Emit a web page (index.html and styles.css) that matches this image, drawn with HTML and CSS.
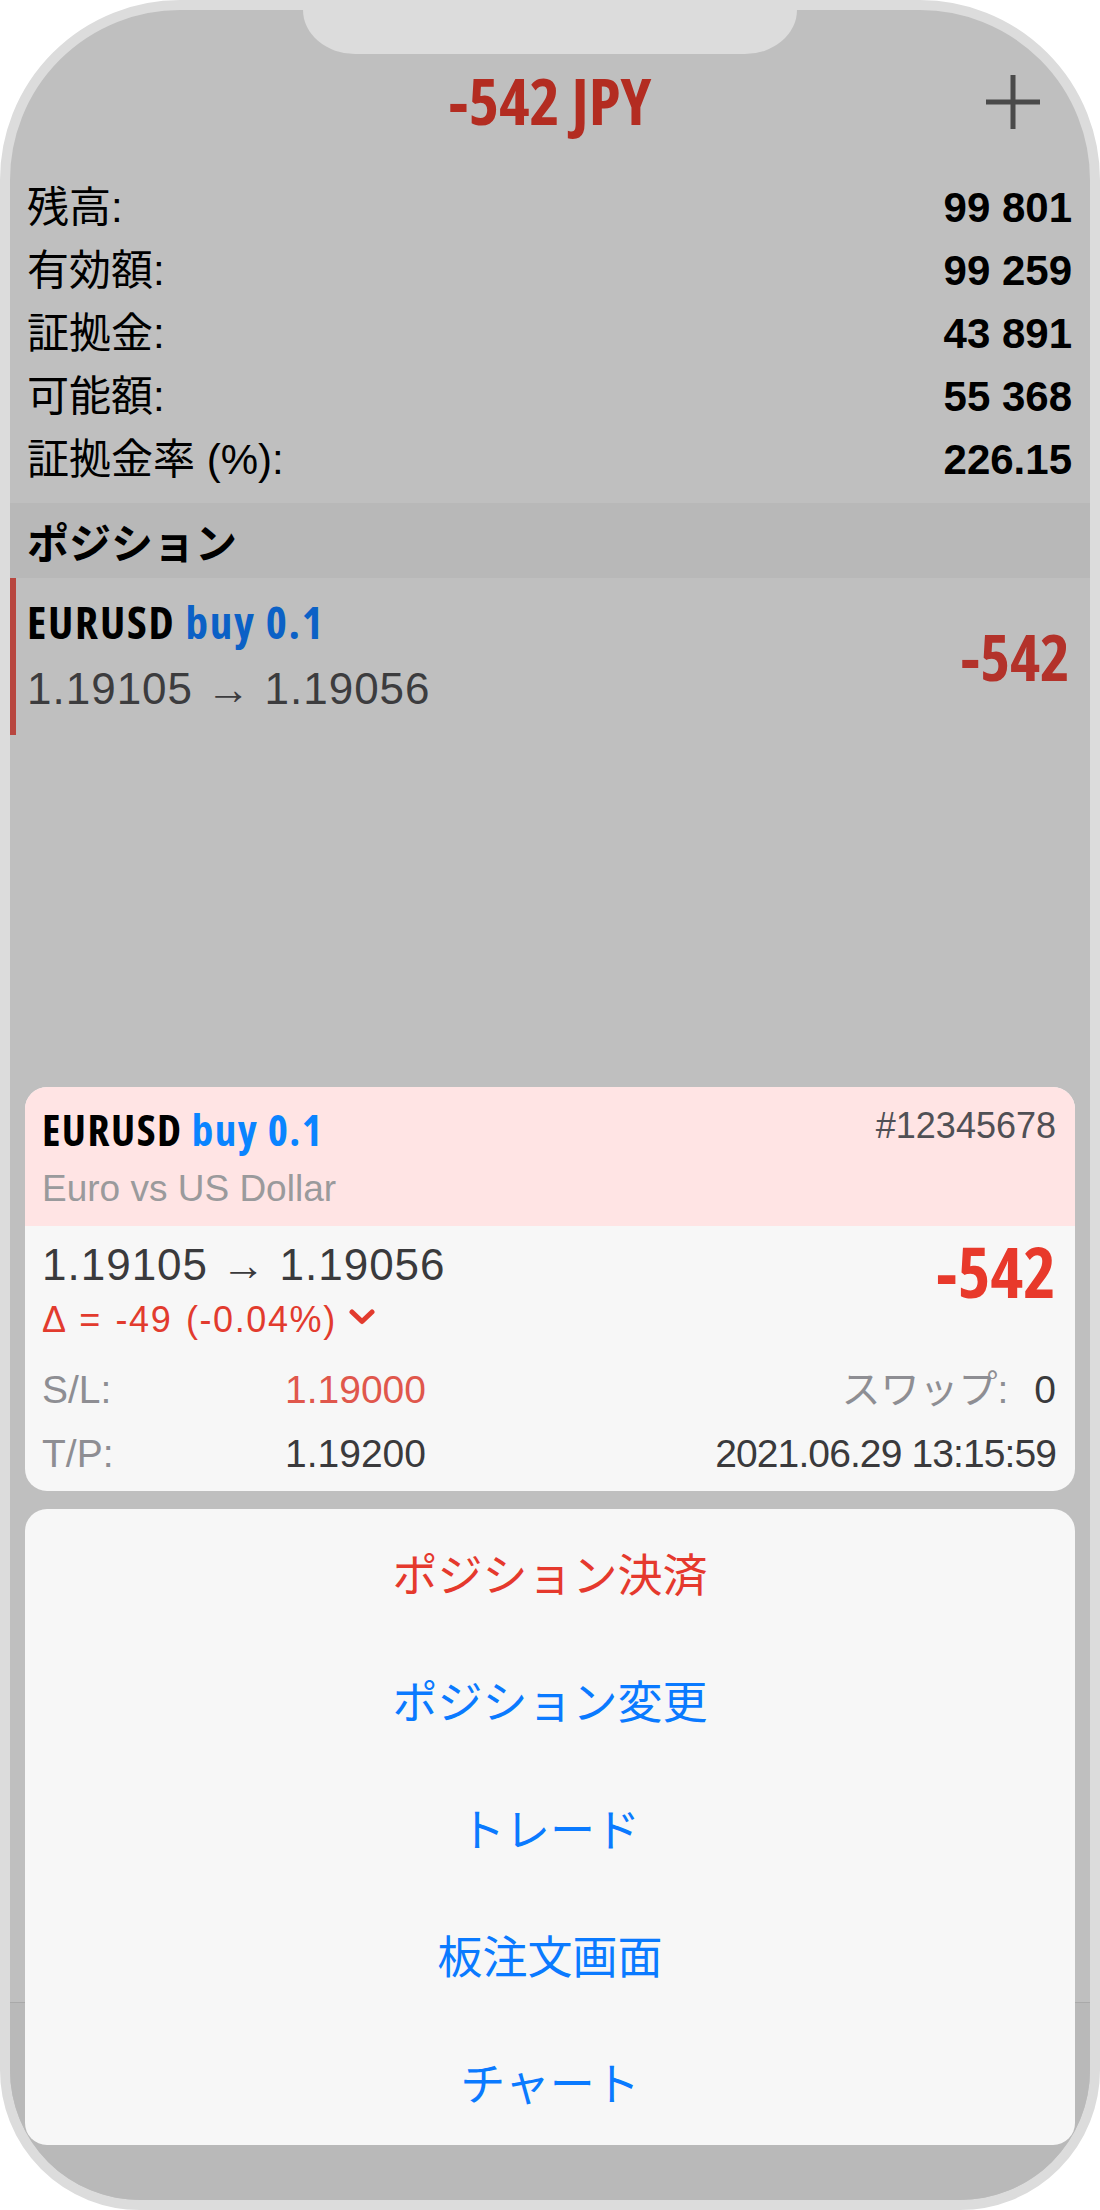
FILE: index.html
```html
<!DOCTYPE html>
<html lang="ja">
<head>
<meta charset="utf-8">
<title>ポジション</title>
<link rel="stylesheet" href="styles.css">
</head>
<body>
<div class="phone">
  <div class="notch"></div>

  <header class="topbar">
    <span class="topbar-side"></span>
    <h1 class="total">-542 JPY</h1>
    <span class="topbar-side topbar-right">
      <svg class="plus" width="54" height="54" viewBox="0 0 54 54" aria-hidden="true">
        <rect x="0" y="24.5" width="54" height="5" fill="#4a4a4a"/>
        <rect x="24.5" y="0" width="5" height="54" fill="#4a4a4a"/>
      </svg>
    </span>
  </header>

  <section class="account">
    <div class="acc-row"><span class="acc-label">残高:</span><span class="acc-value">99 801</span></div>
    <div class="acc-row"><span class="acc-label">有効額:</span><span class="acc-value">99 259</span></div>
    <div class="acc-row"><span class="acc-label">証拠金:</span><span class="acc-value">43 891</span></div>
    <div class="acc-row"><span class="acc-label">可能額:</span><span class="acc-value">55 368</span></div>
    <div class="acc-row"><span class="acc-label">証拠金率 (%):</span><span class="acc-value">226.15</span></div>
  </section>

  <div class="section-title">ポジション</div>

  <div class="position">
    <div class="pos-main">
      <div class="pos-name">EURUSD <span class="pos-buy">buy 0.1</span></div>
      <div class="pos-price">1.19105 → 1.19056</div>
    </div>
    <div class="pos-profit">-542</div>
  </div>

  <div class="spacer"></div>
  <div class="tabbar"></div>

  <div class="overlay">
    <div class="card">
      <div class="card-head">
        <div class="card-title-row">
          <div class="card-name">EURUSD <span class="card-buy">buy 0.1</span></div>
          <div class="ticket">#12345678</div>
        </div>
        <div class="card-desc">Euro vs US Dollar</div>
      </div>
      <div class="card-body">
        <div class="card-top">
          <div class="card-top-left">
            <div class="card-price">1.19105 → 1.19056</div>
            <div class="delta"><span class="delta-text">Δ = -49 (-0.04%)</span>
              <svg class="chevron" width="26" height="16" viewBox="0 0 26 16" aria-hidden="true">
                <polyline points="3,3 13,12.5 23,3" fill="none" stroke="#e23b2e" stroke-width="5" stroke-linecap="round" stroke-linejoin="round"/>
              </svg>
            </div>
          </div>
          <div class="card-profit">-542</div>
        </div>
        <div class="details">
          <span class="d-label">S/L:</span>
          <span class="d-value d-red">1.19000</span>
          <span class="d-right"><span class="d-label">スワップ:</span><span class="d-value">0</span></span>
          <span class="d-label">T/P:</span>
          <span class="d-value">1.19200</span>
          <span class="d-right"><span class="d-value d-date">2021.06.29 13:15:59</span></span>
        </div>
      </div>
    </div>

    <div class="sheet">
      <div class="sheet-item sheet-danger">ポジション決済</div>
      <div class="sheet-item">ポジション変更</div>
      <div class="sheet-item">トレード</div>
      <div class="sheet-item">板注文画面</div>
      <div class="sheet-item">チャート</div>
    </div>
  </div>
</div>
</body>
</html>
```

FILE: styles.css
```css
html, body {
  margin: 0;
  padding: 0;
  background: #ffffff;
}

.phone {
  width: 1100px;
  height: 2210px;
  box-sizing: border-box;
  border: 10px solid #dcdcdc;
  border-radius: 180px 180px 140px 140px;
  background: #bfbfbf;
  overflow: hidden;
  position: relative;
  display: flex;
  flex-direction: column;
  font-family: "Liberation Sans", "Noto Sans CJK JP", sans-serif;
  color: #000;
}

.notch {
  position: absolute;
  top: 0;
  left: 293px;
  width: 494px;
  height: 44px;
  background: #dcdcdc;
  border-radius: 0 0 52px 52px / 0 0 44px 44px;
}

/* condensed display face */
.total,
.pos-name,
.pos-profit,
.card-name,
.card-profit {
  font-family: "Open Sans", "Liberation Sans", sans-serif;
  font-stretch: 75%;
  font-weight: 700;
}

.topbar {
  height: 166px;
  box-sizing: border-box;
  padding-top: 55px;
  display: grid;
  grid-template-columns: 1fr auto 1fr;
  align-items: start;
  flex: none;
}

.total {
  margin: 0;
  font-size: 65px;
  line-height: 70px;
  color: #b32c21;
}

.topbar-right {
  display: flex;
  justify-content: flex-end;
  padding-right: 50px;
  padding-top: 10px;
}

.plus {
  display: block;
}

.account {
  padding: 0 18px 12px 17px;
  flex: none;
}

.acc-row {
  display: flex;
  justify-content: space-between;
  height: 63px;
  line-height: 63px;
  font-size: 42px;
}

.acc-label {
  color: #000;
}

.acc-value {
  font-weight: 700;
  color: #000;
}

.section-title {
  flex: none;
  height: 75px;
  line-height: 75px;
  background: #b8b8b8;
  padding-left: 17px;
  font-size: 42px;
  font-weight: 700;
  font-family: "Noto Sans CJK JP", sans-serif;
}

.position {
  flex: none;
  height: 157px;
  box-sizing: border-box;
  border-left: 6px solid #b8463f;
  padding: 18px 20px 0 11px;
  display: flex;
  justify-content: space-between;
}

.pos-name {
  font-size: 45px;
  line-height: 52px;
  letter-spacing: 1.8px;
  color: #000;
}

.pos-buy {
  color: #0b61c6;
}

.pos-price {
  margin-top: 11px;
  font-size: 44px;
  line-height: 60px;
  letter-spacing: 1px;
  color: #3c3c3e;
}

.pos-profit {
  font-size: 64px;
  line-height: 70px;
  color: #b3322a;
  align-self: center;
  margin-top: -18px;
}

.spacer {
  flex: 1;
}

.tabbar {
  flex: none;
  height: 198px;
  box-sizing: border-box;
  border-top: 1px solid #a9a9a9;
  background: #b9b9b9;
}

.overlay {
  position: absolute;
  left: 15px;
  right: 15px;
  bottom: 55px;
  display: flex;
  flex-direction: column;
  gap: 18px;
}

.card {
  border-radius: 22px;
  overflow: hidden;
  background: #f7f7f7;
}

.card-head {
  background: #ffe4e4;
  height: 139px;
  box-sizing: border-box;
  padding: 18px 19px 0 17px;
}

.card-title-row {
  display: flex;
  justify-content: space-between;
  align-items: flex-start;
}

.card-name {
  font-size: 43px;
  line-height: 50px;
  letter-spacing: 1.5px;
  color: #000;
}

.card-buy {
  color: #0a84ff;
}

.ticket {
  margin-top: 2px;
  font-size: 36px;
  line-height: 37px;
  color: #505055;
}

.card-desc {
  margin-top: 12px;
  font-size: 37px;
  line-height: 44px;
  color: #9a9a9c;
}

.card-body {
  height: 265px;
  box-sizing: border-box;
  padding: 11px 19px 0 17px;
}

.card-top {
  display: flex;
  justify-content: space-between;
  align-items: flex-start;
}

.card-price {
  font-size: 44px;
  line-height: 56px;
  letter-spacing: 1px;
  color: #3a3a3c;
}

.delta {
  margin-top: 5px;
  display: flex;
  align-items: center;
  gap: 12px;
  height: 44px;
}

.delta-text {
  font-size: 36px;
  line-height: 44px;
  color: #e23b2e;
  letter-spacing: 1.6px;
  word-spacing: 2px;
}

.chevron {
  display: block;
  margin-top: -6px;
}

.card-profit {
  margin-top: -1px;
  font-size: 70px;
  line-height: 70px;
  color: #e8392b;
}

.details {
  margin-top: 16px;
  display: grid;
  grid-template-columns: 243px auto 1fr;
  grid-auto-rows: 64px;
  font-size: 39px;
  line-height: 64px;
}

.d-label {
  color: #8e8e93;
}

.d-value {
  color: #3a3a3c;
}

.d-red {
  color: #e0574c;
}

.d-date {
  letter-spacing: -0.9px;
}

.d-right {
  display: flex;
  justify-content: flex-end;
  gap: 26px;
}

.sheet {
  background: #f7f7f7;
  border-radius: 22px;
  display: flex;
  flex-direction: column;
}

.sheet-item {
  height: 127.2px;
  display: flex;
  align-items: center;
  justify-content: center;
  font-family: "Noto Sans CJK JP", sans-serif;
  font-size: 45px;
  color: #0a7aff;
}

.sheet-danger {
  color: #e5392d;
}
```
